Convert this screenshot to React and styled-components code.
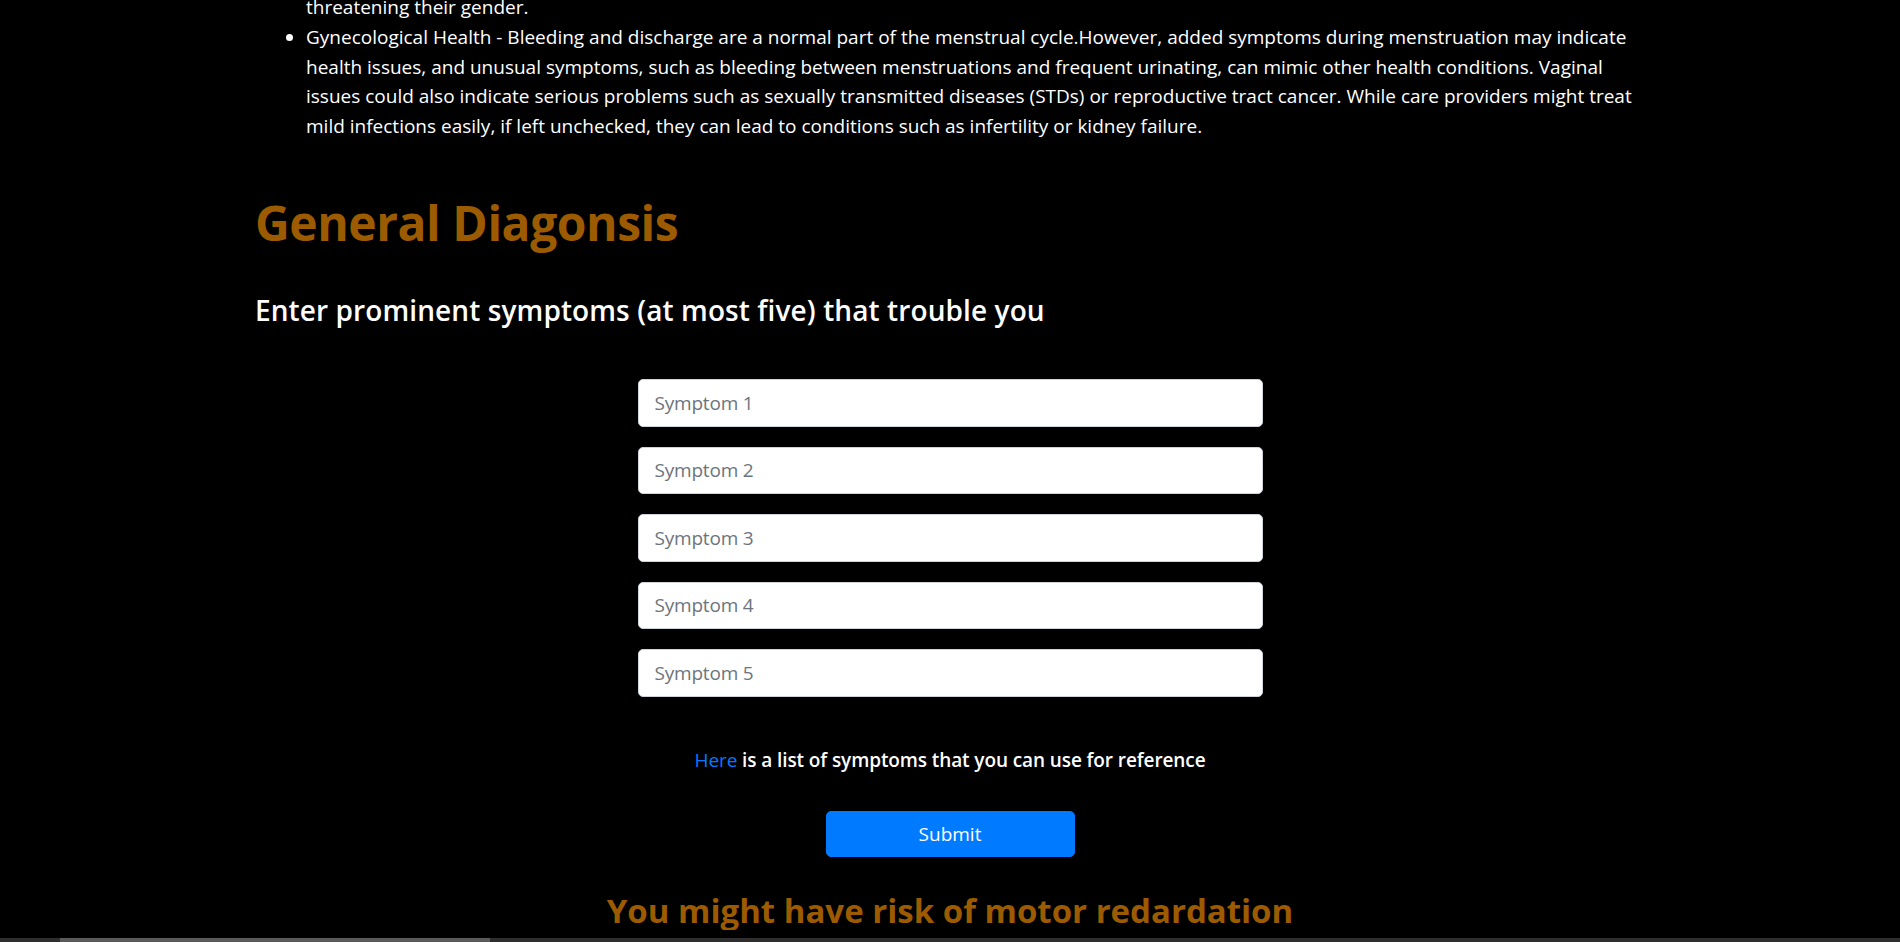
import styled, { createGlobalStyle } from "styled-components";

const GlobalStyle = createGlobalStyle`
    html, body {
        margin: 0;
        padding: 0;
        background: #000;
        overflow: hidden;
    }
    body {
        color: #fff;
        font-family: "Open Sans", "Noto Sans", sans-serif;
    }
    * {
        box-sizing: border-box;
    }
`;

const Page = styled.div`
    width: 1390px;
    margin: -7px auto 0;
`;

const SymptomList = styled.ul`
    margin: 0;
    padding: 0 12px 0 51px;
    font-size: 19px;
    line-height: 29.8px;
    letter-spacing: 0;
`;

const Item = styled.li`
    list-style: ${(props) => (props.$continued ? "none" : "disc")};
`;

const Title = styled.h1`
    margin: 52px 0 0;
    font-size: 48px;
    line-height: 1.2;
    font-weight: 700;
    color: #9c5b00;
    letter-spacing: -0.45px;
`;

const Prompt = styled.h3`
    margin: 42px 0 0;
    font-size: 28px;
    line-height: 1.2;
    font-weight: 600;
    letter-spacing: 0.1px;
`;

const Form = styled.form`
    display: flex;
    flex-direction: column;
    align-items: center;
    margin-top: 52px;
`;

const Fields = styled.div`
    display: flex;
    flex-direction: column;
    gap: 20px;
    width: 625px;
`;

const Field = styled.input`
    width: 100%;
    height: 47.5px;
    padding: 8px 16px;
    font-family: inherit;
    font-size: 19px;
    color: #495057;
    background: #fff;
    border: 1px solid #ced4da;
    border-radius: 5px;
    outline: none;

    &::placeholder {
        color: #6c757d;
        letter-spacing: -0.2px;
    }
`;

const Hint = styled.p`
    margin: 48px 0 0;
    font-size: 19px;
    line-height: 30px;
    font-weight: 600;
    letter-spacing: -0.1px;
`;

const HintLink = styled.a`
    color: #007bff;
    text-decoration: none;
    font-weight: 500;
`;

const SubmitButton = styled.button`
    margin-top: 36px;
    width: 249px;
    height: 46px;
    font-family: inherit;
    font-size: 19px;
    color: #fff;
    background: #007bff;
    border: 1px solid #007bff;
    border-radius: 5px;
    cursor: pointer;
`;

const Result = styled.h2`
    margin: 34px 0 0;
    text-align: center;
    font-size: 33px;
    line-height: 1.2;
    font-weight: 700;
    color: #9c5b00;
    letter-spacing: 0;
`;

const ScrollStrip = styled.div`
    position: fixed;
    left: 0;
    right: 0;
    bottom: 0;
    height: 4px;
    background: #2e2e2e;
`;

const ScrollThumb = styled.div`
    width: 430px;
    height: 100%;
    margin-left: 60px;
    background: #5a5a5a;
`;

const symptoms = [1, 2, 3, 4, 5];

const App = () => (
    <>
        <GlobalStyle />
        <Page>
            <SymptomList>
                <Item $continued>threatening their gender.</Item>
                <Item>
                    Gynecological Health - Bleeding and discharge are a normal part of the
                    menstrual cycle.However, added symptoms during menstruation may indicate
                    health issues, and unusual symptoms, such as bleeding between menstruations
                    and frequent urinating, can mimic other health conditions. Vaginal issues
                    could also indicate serious problems such as sexually transmitted diseases
                    (STDs) or reproductive tract cancer. While care providers might treat mild
                    infections easily, if left unchecked, they can lead to conditions such as
                    infertility or kidney failure.
                </Item>
            </SymptomList>

            <Title>General Diagonsis</Title>
            <Prompt>Enter prominent symptoms (at most five) that trouble you</Prompt>

            <Form onSubmit={(e) => e.preventDefault()}>
                <Fields>
                    {symptoms.map((n) => (
                        <Field key={n} type="text" placeholder={`Symptom ${n}`} />
                    ))}
                </Fields>
                <Hint>
                    <HintLink href="#symptoms">Here</HintLink> is a list of symptoms that you
                    can use for reference
                </Hint>
                <SubmitButton type="submit">Submit</SubmitButton>
            </Form>

            <Result>You might have risk of motor redardation</Result>
        </Page>
        <ScrollStrip>
            <ScrollThumb />
        </ScrollStrip>
    </>
);

export default App;
